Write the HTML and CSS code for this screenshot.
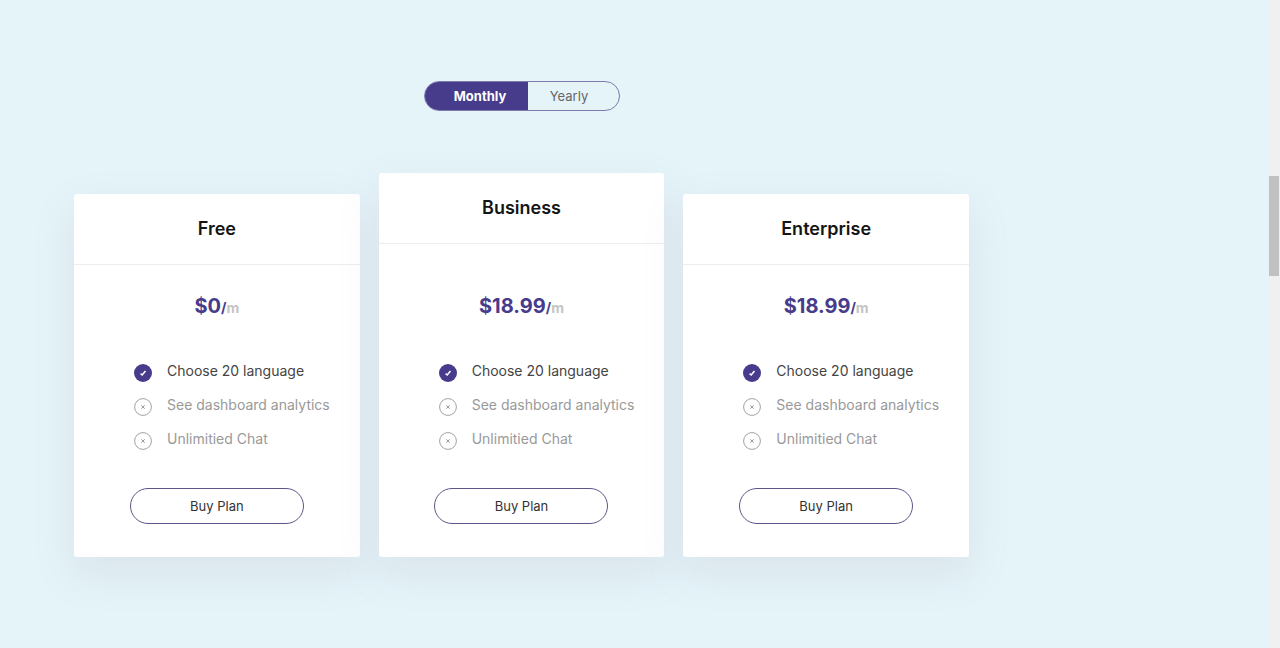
FILE: index.html
```
<!DOCTYPE html>
<html lang="en">
<head>
<meta charset="utf-8">
<meta name="viewport" content="width=device-width, initial-scale=1">
<title>Pricing plans</title>
<link rel="stylesheet" href="styles.css">
</head>
<body>
<svg class="sprite" aria-hidden="true">
  <symbol id="yes" viewBox="0 0 18 18">
    <circle cx="9" cy="9" r="9" fill="#473c8b"/>
    <path d="M6.6 9.6 8.2 11 11.5 7" fill="none" stroke="#fff" stroke-width="1.5"/>
  </symbol>
  <symbol id="no" viewBox="0 0 18 18">
    <circle cx="9" cy="9" r="8.4" fill="none" stroke="#a2a2a2" stroke-width="1"/>
    <path d="M7.3 7.3 10.7 10.7M10.7 7.3 7.3 10.7" fill="none" stroke="#999" stroke-width="1"/>
  </symbol>
</svg>
<main class="pricing">
  <div class="toggle">
    <button class="toggle-option active" type="button" aria-pressed="true">Monthly</button>
    <button class="toggle-option" type="button" aria-pressed="false">Yearly</button>
  </div>
  <div class="plans">
    <section class="card">
      <h2 class="name">Free</h2>
      <p class="price">$0<span class="slash">/</span><span class="unit">m</span></p>
      <ul class="features">
        <li class="feature on"><svg class="icon"><use href="#yes"/></svg>Choose 20 language</li>
        <li class="feature"><svg class="icon"><use href="#no"/></svg>See dashboard analytics</li>
        <li class="feature"><svg class="icon"><use href="#no"/></svg>Unlimitied Chat</li>
      </ul>
      <button class="buy" type="button">Buy Plan</button>
    </section>
    <section class="card featured">
      <h2 class="name">Business</h2>
      <p class="price">$18.99<span class="slash">/</span><span class="unit">m</span></p>
      <ul class="features">
        <li class="feature on"><svg class="icon"><use href="#yes"/></svg>Choose 20 language</li>
        <li class="feature"><svg class="icon"><use href="#no"/></svg>See dashboard analytics</li>
        <li class="feature"><svg class="icon"><use href="#no"/></svg>Unlimitied Chat</li>
      </ul>
      <button class="buy" type="button">Buy Plan</button>
    </section>
    <section class="card">
      <h2 class="name">Enterprise</h2>
      <p class="price">$18.99<span class="slash">/</span><span class="unit">m</span></p>
      <ul class="features">
        <li class="feature on"><svg class="icon"><use href="#yes"/></svg>Choose 20 language</li>
        <li class="feature"><svg class="icon"><use href="#no"/></svg>See dashboard analytics</li>
        <li class="feature"><svg class="icon"><use href="#no"/></svg>Unlimitied Chat</li>
      </ul>
      <button class="buy" type="button">Buy Plan</button>
    </section>
  </div>
</main>
<div class="scroll-track"><div class="scroll-thumb"></div></div>
</body>
</html>
```
FILE: styles.css
```
* {
  box-sizing: border-box;
}

body {
  display: flex;
  min-height: 100vh;
  margin: 0;
  background: #e4f4f9;
  color: #333;
  font-family: Inter, "Liberation Sans", sans-serif;
}

button {
  font-family: inherit;
  cursor: pointer;
}

.sprite {
  position: absolute;
  width: 0;
  height: 0;
}

.pricing {
  flex: 1;
  display: flex;
  flex-direction: column;
  align-items: center;
  gap: 62px;
  padding: 81px 300px 64px 74px;
}

.toggle {
  display: flex;
  width: 196px;
  height: 30px;
  border: 1px solid #7c79a8;
  border-radius: 15px;
  overflow: hidden;
}

.toggle-option {
  flex: 1;
  padding: 0 8px 0 0;
  border: 0;
  background: transparent;
  color: #666;
  font-size: 13px;
}

.toggle-option.active {
  flex: 0 0 103px;
  padding: 0 0 0 8px;
  background: #473c8b;
  color: #fff;
  font-weight: 700;
}

.plans {
  display: grid;
  grid-template-columns: repeat(3, 1fr);
  align-items: end;
  gap: 19px;
  width: 100%;
}

.card {
  display: flex;
  flex-direction: column;
  align-items: center;
  padding-bottom: 33px;
  border-radius: 3px;
  background: #fff;
  box-shadow: 0 16px 40px rgba(170, 140, 160, 0.16);
}

.name {
  width: 100%;
  margin: 0;
  padding: 23px 0;
  border-bottom: 1px solid #eaeeef;
  color: #151515;
  font-size: 18px;
  font-weight: 600;
  line-height: 24px;
  text-align: center;
}

.price {
  margin: 0;
  padding: 26px 0 34px;
  color: #473c8b;
  font-size: 20px;
  font-weight: 700;
  line-height: 30px;
}

.featured .price {
  padding-top: 47px;
}

.slash,
.unit {
  font-size: 14px;
}

.unit {
  color: #c4c4c4;
}

.features {
  display: flex;
  flex-direction: column;
  gap: 13px;
  align-self: stretch;
  margin: 0;
  padding: 4px 0 38px 60px;
  list-style: none;
}

.feature {
  display: flex;
  gap: 15px;
  color: #999;
  font-size: 14px;
  line-height: 20px;
  white-space: nowrap;
}

.feature.on {
  color: #444;
}

.icon {
  flex: none;
  width: 18px;
  height: 18px;
  margin-top: 3px;
}

.buy {
  width: 174px;
  height: 36px;
  border: 1px solid #5d5787;
  border-radius: 18px;
  background: #fff;
  color: #333;
  font-size: 13px;
  font-weight: 400;
}

.scroll-track {
  width: 11px;
  padding-top: 176px;
  background: #f1f0f1;
}

.scroll-thumb {
  width: 10px;
  height: 100px;
  background: #c1c1c1;
}
```
